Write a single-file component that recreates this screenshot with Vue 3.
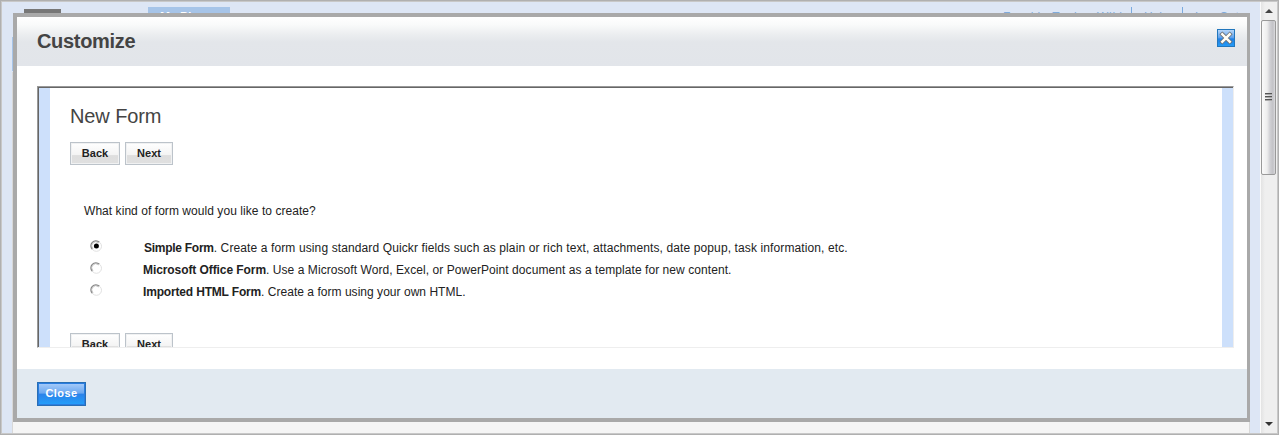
<script setup>
const options = [
  { name: 'Simple Form', text: '. Create a form using standard Quickr fields such as plain or rich text, attachments, date popup, task information, etc.', cls: 'simple', on: true },
  { name: 'Microsoft Office Form', text: '. Use a Microsoft Word, Excel, or PowerPoint document as a template for new content.', cls: 'office', on: false },
  { name: 'Imported HTML Form', text: '. Create a form using your own HTML.', cls: 'html', on: false }
]
</script>

<template>
  <div class="window">
    <div class="page">
      <div class="logo"></div>
      <div class="tab">My Places</div>
      <nav class="links">
        <span class="user">Frankie Tucker Wiki</span><i></i><span class="help">Help</span><i></i><span class="logout">Log Out</span>
      </nav>
      <div class="side"></div>
      <div class="sheet"></div>

      <section class="dialog">
        <header>
          <h1>Customize</h1>
          <button class="x" aria-label="Close dialog">
            <svg width="16" height="16" viewBox="0 0 16 16" stroke-linecap="square">
              <path d="M4.3 4.3 L11.7 11.7 M11.7 4.3 L4.3 11.7" stroke="#6a6f74" stroke-width="4.1" />
              <path d="M4.3 4.3 L11.7 11.7 M11.7 4.3 L4.3 11.7" stroke="#fffdf5" stroke-width="2.5" />
            </svg>
          </button>
        </header>
        <main>
          <div class="frame">
            <div class="form">
              <h2>New Form</h2>
              <div class="buttons"><button class="back">Back</button><button class="next">Next</button></div>
              <p class="question"><span>What kind of form would you like to create?</span></p>
              <div class="options">
                <label v-for="o in options" :key="o.name">
                  <svg class="radio" width="12" height="12" viewBox="0 0 12 12" fill="none">
                    <path d="M2.4 9.4 A4.8 4.8 0 0 1 9.4 2.2" stroke="#858585" stroke-width="1.2" />
                    <path d="M3 8.6 A3.8 3.8 0 0 1 8.5 3" stroke="#b5b5b5" stroke-width=".7" />
                    <path d="M10 2.6 A4.8 4.8 0 0 1 2.8 9.8" stroke="#e0e0e0" stroke-width="1" />
                    <circle v-if="o.on" cx="6.4" cy="6" r="2.5" fill="#000" />
                  </svg>
                  <span class="copy" :class="o.cls"><b>{{ o.name }}</b><span>{{ o.text }}</span></span>
                </label>
              </div>
              <div class="buttons lower"><button class="back">Back</button><button class="next">Next</button></div>
            </div>
          </div>
        </main>
        <footer><button class="close">Close</button></footer>
      </section>
    </div>
    <aside class="scroll">
      <svg class="up" width="8" height="4" viewBox="0 0 8 4"><path d="M0 4 L4 0 L8 4Z" fill="#444" /></svg>
      <div class="thumb"><i></i><i></i><i></i></div>
      <svg class="down" width="8" height="4" viewBox="0 0 8 4"><path d="M0 0 L4 4 L8 0Z" fill="#333" /></svg>
    </aside>
  </div>
</template>

<style>
body { margin: 0; overflow: hidden; }
</style>

<style scoped>
* { box-sizing: border-box; }
.window {
  width: 1279px; height: 435px; display: flex; overflow: hidden;
  border: 1px solid #b0b0b0; box-shadow: inset 0 0 0 1px #c8c8c8;
  padding: 1px; background: #dde6f5;
  font-family: "Liberation Sans", Arial, sans-serif; color: #222;
}
.page { position: relative; width: 1258px; height: 431px; background: #dde6f5; overflow: hidden; }
button { font-family: inherit; padding: 0; margin: 0; border-radius: 0; }
.logo { position: absolute; left: 22px; top: 7px; width: 37px; height: 20px; background: #777; }
.tab {
  position: absolute; left: 146px; top: 5px; width: 82px; height: 20px; background: #a6c4e8;
  color: #fff; font-weight: bold; font-size: 12px; line-height: 16px; padding-left: 12px; padding-top: 2px;
}
.links {
  position: absolute; left: 1001px; top: 5px; height: 20px; display: flex; white-space: nowrap;
  font-size: 12px; line-height: 14px; padding-top: 3px; color: #7fabdc;
}
.links i { width: 1px; height: 20px; margin-top: -3px; background: #7aaade; }
.user { width: 128px; letter-spacing: .75px; }
.help { width: 50px; padding-left: 12px; }
.logout { padding-left: 12px; letter-spacing: .2px; }
.side { position: absolute; left: 10px; top: 35px; width: 4px; height: 34px; background: #a6c4e8; }
.sheet { position: absolute; left: 10px; top: 70px; width: 1238px; height: 361px; background: #f5f5f5; border: solid #d8d8d8; border-width: 0 1px; }
.dialog {
  position: absolute; left: 11px; top: 11px; width: 1237px; height: 409px;
  border: 4px solid #a9a9a9; border-right-width: 3px; background: #fff;
  display: flex; flex-direction: column;
}
header {
  height: 49px; display: flex; justify-content: space-between; align-items: flex-start; padding: 12px 12px 0 20px;
  background: linear-gradient(#fff 0, #f9fafa 8px, #eceef0 17px, #e3e6ea 25px, #e2e5ea 49px);
}
h1 { margin: 0; font-size: 20px; line-height: 24px; color: #444; letter-spacing: -.32px; }
.x { width: 18px; height: 18px; border: 1px solid #2277bd; background: linear-gradient(#b6d6f8, #5a9fec 50%, #1f7fe4 55%, #259af5); }
.x svg { display: block; }
main { height: 303px; padding: 20px 13px 0 20px; }
.frame {
  width: 1197px; height: 262px; border: 1px solid; border-color: #999 #eee #eee #999; overflow: hidden;
  box-shadow: inset 1px 1px #666;
  padding: 1px 0 0 1px;
}
.form { height: 259px; border: solid #cde0fb; border-width: 0 11px; padding-left: 20px; overflow: hidden; }
h2 { margin: 0; padding-top: 16px; font-size: 20px; line-height: 24px; font-weight: normal; color: #444; letter-spacing: -.1px; }
.buttons { display: flex; gap: 5px; margin-top: 14px; }
.buttons button {
  height: 23px; border: 1px solid #bcc3ca; font-weight: bold; font-size: 11px; line-height: 20px; padding-bottom: 1px; color: #222;
  background: linear-gradient(#fff 0, #f4f4f4 55%, #dedede 60%, #e0e0e0); box-shadow: inset 0 0 0 1px #f0f1f2;
}
.back { width: 50px; }
.next { width: 48px; }
.question { margin: 39px 0 0 14px; font-size: 12px; line-height: 14px; letter-spacing: .055px; }
.options { margin-top: 19px; }
label { display: flex; height: 22px; font-size: 12px; line-height: 22px; padding-left: 20px; }
.radio { margin-top: 3px; }
.copy { margin-left: 41px; white-space: nowrap; }
.simple { margin-left: 42px; letter-spacing: .115px; }
.simple b { letter-spacing: -.27px; }
.office { letter-spacing: .065px; }
.office b { letter-spacing: -.08px; }
.html { letter-spacing: .03px; }
.html b { letter-spacing: -.17px; }
.lower { margin-top: 30px; }
footer { height: 49px; background: #e2eaf1; padding: 13px 20px; display: flex; }
.close {
  width: 49px; height: 24px; border: 1px solid #286fb5; color: #fff; font-weight: bold; font-size: 11px; line-height: 20px; padding-bottom: 2px; letter-spacing: .45px;
  background: linear-gradient(#a9cdfa, #6ba8f0 45%, #2a83ea 52%, #22a0fa); box-shadow: inset 0 0 0 1px #2a7de0;
}
.scroll {
  width: 17px; height: 431px; border-left: 1px solid #fafafa; background: linear-gradient(90deg, #e3e3e3, #efefef 4px, #efefef);
  display: flex; flex-direction: column; align-items: center;
}
.up { margin-top: 7px; }
.thumb {
  width: 15px; height: 155px; margin: 7px 1px 0 0; border: 1px solid #999; border-radius: 2px;
  background: linear-gradient(90deg, #fafafa, #eee 5px, #d0d0d4 8px, #c2c2c6 11px, #dcdcdf);
  display: flex; flex-direction: column; align-items: center; gap: 1px; padding-top: 72px;
}
.thumb i { width: 7px; height: 2px; background: linear-gradient(#555 50%, #aaa 50%); }
.down { margin-top: auto; margin-bottom: 7px; }
</style>
